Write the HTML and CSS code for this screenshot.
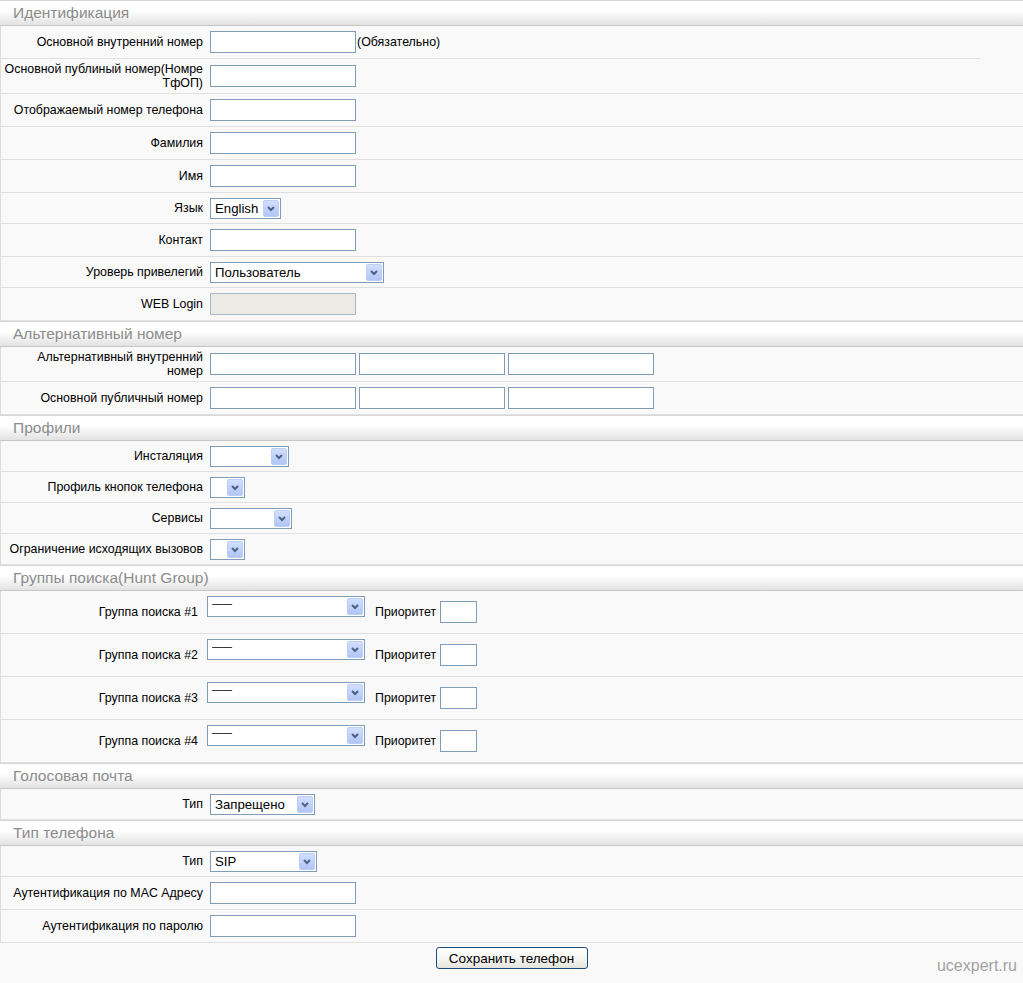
FILE: index.html
```html
<!DOCTYPE html>
<html lang="ru">
<head>
<meta charset="utf-8">
<title>Телефон</title>
<link rel="stylesheet" href="styles.css">
</head>
<body>
<div class="page">
<svg width="0" height="0" class="defs" aria-hidden="true">
  <defs>
    <linearGradient id="ag" x1="0" y1="0" x2="0" y2="1">
      <stop offset="0" stop-color="#d3e0fd"/>
      <stop offset="1" stop-color="#b0c4f6"/>
    </linearGradient>
    <symbol id="arr" viewBox="0 0 16 17">
      <rect x="0.5" y="0.5" width="15" height="16" rx="1.5" fill="url(#ag)" stroke="#bccdf6"/>
      <path d="M5 7 L8 10 L11 7" fill="none" stroke="#4d6185" stroke-width="2"/>
    </symbol>
  </defs>
</svg>

<section class="sec">
  <div class="sec-head">Идентификация</div>
  <div class="sec-body">
    <div class="row short"><div class="lbl">Основной внутренний номер</div><div class="fld"><input class="inp" type="text"><span class="note">(Обязательно)</span></div></div>
    <div class="row two"><div class="lbl">Основной публиный номер(Номре<br>ТфОП)</div><div class="fld"><input class="inp" type="text"></div></div>
    <div class="row"><div class="lbl">Отображаемый номер телефона</div><div class="fld"><input class="inp" type="text"></div></div>
    <div class="row"><div class="lbl">Фамилия</div><div class="fld"><input class="inp" type="text"></div></div>
    <div class="row"><div class="lbl">Имя</div><div class="fld"><input class="inp" type="text"></div></div>
    <div class="row srow"><div class="lbl">Язык</div><div class="fld"><div class="sel w-lang"><span class="sv">English</span><svg class="arr"><use href="#arr"/></svg></div></div></div>
    <div class="row"><div class="lbl">Контакт</div><div class="fld"><input class="inp" type="text"></div></div>
    <div class="row srow"><div class="lbl">Уроверь привелегий</div><div class="fld"><div class="sel w-priv"><span class="sv">Пользователь</span><svg class="arr"><use href="#arr"/></svg></div></div></div>
    <div class="row"><div class="lbl">WEB Login</div><div class="fld"><input class="inp dis" type="text" disabled></div></div>
  </div>
</section>

<section class="sec">
  <div class="sec-head">Альтернативный номер</div>
  <div class="sec-body">
    <div class="row two"><div class="lbl">Альтернативный внутренний<br>номер</div><div class="fld trio"><input class="inp" type="text"><input class="inp" type="text"><input class="inp" type="text"></div></div>
    <div class="row"><div class="lbl">Основной публичный номер</div><div class="fld trio"><input class="inp" type="text"><input class="inp" type="text"><input class="inp" type="text"></div></div>
  </div>
</section>

<section class="sec">
  <div class="sec-head">Профили</div>
  <div class="sec-body">
    <div class="row srow"><div class="lbl">Инсталяция</div><div class="fld"><div class="sel w-inst"><span class="sv"></span><svg class="arr"><use href="#arr"/></svg></div></div></div>
    <div class="row srow"><div class="lbl">Профиль кнопок телефона</div><div class="fld"><div class="sel w-tiny"><span class="sv"></span><svg class="arr"><use href="#arr"/></svg></div></div></div>
    <div class="row srow"><div class="lbl">Сервисы</div><div class="fld"><div class="sel w-serv"><span class="sv"></span><svg class="arr"><use href="#arr"/></svg></div></div></div>
    <div class="row srow"><div class="lbl">Ограничение исходящих вызовов</div><div class="fld"><div class="sel w-tiny"><span class="sv"></span><svg class="arr"><use href="#arr"/></svg></div></div></div>
  </div>
</section>

<section class="sec">
  <div class="sec-head">Группы поиска(Hunt Group)</div>
  <div class="sec-body">
    <div class="hrow"><div class="hlbl">Группа поиска #1</div><div class="sel w-hunt"><span class="sv dash">——</span><svg class="arr"><use href="#arr"/></svg></div><span class="plbl">Приоритет</span><input class="inp pinp" type="text"></div>
    <div class="hrow"><div class="hlbl">Группа поиска #2</div><div class="sel w-hunt"><span class="sv dash">——</span><svg class="arr"><use href="#arr"/></svg></div><span class="plbl">Приоритет</span><input class="inp pinp" type="text"></div>
    <div class="hrow"><div class="hlbl">Группа поиска #3</div><div class="sel w-hunt"><span class="sv dash">——</span><svg class="arr"><use href="#arr"/></svg></div><span class="plbl">Приоритет</span><input class="inp pinp" type="text"></div>
    <div class="hrow"><div class="hlbl">Группа поиска #4</div><div class="sel w-hunt"><span class="sv dash">——</span><svg class="arr"><use href="#arr"/></svg></div><span class="plbl">Приоритет</span><input class="inp pinp" type="text"></div>
  </div>
</section>

<section class="sec">
  <div class="sec-head">Голосовая почта</div>
  <div class="sec-body">
    <div class="row srow"><div class="lbl">Тип</div><div class="fld"><div class="sel w-vm"><span class="sv">Запрещено</span><svg class="arr"><use href="#arr"/></svg></div></div></div>
  </div>
</section>

<section class="sec">
  <div class="sec-head">Тип телефона</div>
  <div class="sec-body">
    <div class="row srow"><div class="lbl">Тип</div><div class="fld"><div class="sel w-sip"><span class="sv">SIP</span><svg class="arr"><use href="#arr"/></svg></div></div></div>
    <div class="row"><div class="lbl">Аутентификация по MAC Адресу</div><div class="fld"><input class="inp" type="text"></div></div>
    <div class="row"><div class="lbl">Аутентификация по паролю</div><div class="fld"><input class="inp" type="text"></div></div>
  </div>
</section>

<div class="actions"><button class="btn" type="button">Сохранить телефон</button></div>

<div class="watermark">ucexpert.ru</div>
</div>
</body>
</html>
```

FILE: styles.css
```css
html, body {
  margin: 0;
  padding: 0;
}
body {
  background: #f9f9f9;
  font-family: "Liberation Sans", Arial, sans-serif;
  font-size: 12.4px;
  color: #000;
}
.page {
  position: relative;
  min-height: 983px;
}
.defs {
  position: absolute;
  width: 0;
  height: 0;
}
.sec-head {
  height: 24px;
  border-top: 1px solid #d6d6d6;
  border-bottom: 1px solid #c6c6c6;
  background: linear-gradient(to bottom, #ffffff 0%, #ffffff 40%, #e2e2e2 100%);
  padding-left: 13px;
  font-size: 15.5px;
  line-height: 24px;
  color: #8c8c8c;
}
.sec-body {
  border-left: 1px solid #dcdcdc;
}
.row {
  display: grid;
  grid-template-columns: 202px 1fr;
  column-gap: 7px;
  align-items: center;
  min-height: 32px;
  border-bottom: 1px solid #e0e0e0;
}
.row.srow {
  min-height: 30px;
}
.row.two {
  min-height: 28px;
  padding: 3px 0;
}
.row.short {
  margin-right: 43px;
}
.lbl {
  text-align: right;
  line-height: 14px;
}
.fld {
  display: flex;
  align-items: center;
}
.trio {
  gap: 3px;
}
.inp {
  box-sizing: border-box;
  width: 146px;
  height: 22px;
  margin: 0;
  padding: 0 3px;
  border: 1px solid #7f9db9;
  background: #fff;
  font: 13px "Liberation Sans", Arial, sans-serif;
}
.inp.dis {
  background: #ebeae4;
  border-color: #a9b8c6;
}
.note {
  margin-left: 1px;
}
.sel {
  box-sizing: border-box;
  display: flex;
  align-items: center;
  height: 21px;
  border: 1px solid #7f9db9;
  background: #fff;
  padding-left: 4px;
  font-size: 13.2px;
}
.sv {
  flex: 1;
  white-space: nowrap;
  overflow: hidden;
}
.arr {
  width: 16px;
  height: 17px;
  margin: 0 1px 0 2px;
  flex: none;
}
.w-lang { width: 71px; }
.w-priv { width: 174px; }
.w-inst { width: 79px; }
.w-tiny { width: 35px; }
.w-serv { width: 82px; }
.w-vm { width: 105px; }
.w-sip { width: 107px; }
.w-hunt { width: 158px; }

.hrow {
  display: flex;
  align-items: center;
  height: 42px;
  border-bottom: 1px solid #e0e0e0;
}
.hlbl {
  width: 197px;
  text-align: right;
  margin-right: 9px;
}
.w-hunt {
  margin-bottom: 12px;
}
.dash {
  font-size: 10px;
  line-height: 10px;
  align-self: flex-start;
  margin-top: 2px;
  letter-spacing: 0;
}
.plbl {
  margin-left: 10px;
  width: 64px;
  white-space: nowrap;
}
.pinp {
  width: 37px;
  margin-left: 1px;
}
.actions {
  display: flex;
  justify-content: center;
  padding-top: 4px;
}
.btn {
  box-sizing: border-box;
  width: 152px;
  height: 22px;
  padding: 0;
  border: 1px solid #1c4a7c;
  border-radius: 3px;
  background: linear-gradient(to bottom, #ffffff 0%, #f4f4f0 60%, #e3e2da 100%);
  font: 13.5px "Liberation Sans", Arial, sans-serif;
  color: #000;
}
.watermark {
  position: absolute;
  right: 6px;
  top: 957px;
  font-size: 16px;
  color: #a2a2a2;
}
```
